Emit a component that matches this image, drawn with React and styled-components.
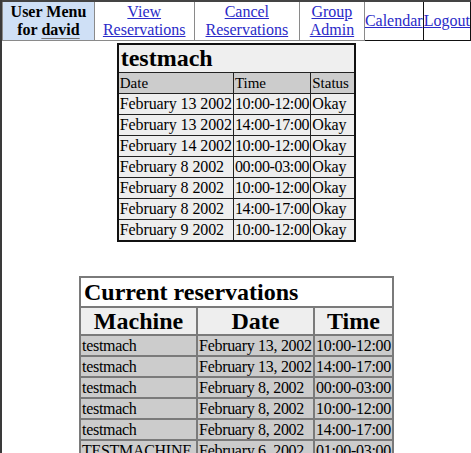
import React from "react";
import styled, { createGlobalStyle } from "styled-components";

const GlobalStyle = createGlobalStyle`
  html, body {
    margin: 0;
    padding: 0;
    background: #ffffff;
  }
  body {
    font-family: "Liberation Serif", "Times New Roman", serif;
    font-size: 16px;
    color: #000;
  }
`;

const Page = styled.div`
  min-height: 100vh;
  border-left: 2px solid #3a3a3a;
  box-sizing: border-box;
  overflow: hidden;
`;

const Nav = styled.table`
  width: 100%;
  border-collapse: collapse;
  border-top: 2px solid #444;
  td {
    border: 1px solid #8a8a8a;
    padding: 1px 2px;
    text-align: center;
    vertical-align: middle;
    line-height: 18px;
    height: 36px;
  }
`;

const UserCell = styled.td`
  && {
    background: #cfe0f6;
    font-weight: bold;
    width: 88px;
  }
  span {
    text-decoration: underline;
    text-decoration-color: #777;
    text-underline-offset: 3px;
  }
`;

const NavCell = styled.td`
  && {
    width: ${(p) => (p.$w ? `${p.$w}px` : "auto")};
    border-color: ${(p) => (p.$dark ? "#111" : "#8a8a8a")};
    padding: ${(p) => (p.$dark ? "0" : "1px 2px")};
  }
`;

const NavLink = styled.a`
  color: #2a2ac8;
  text-decoration: underline;
`;

const Content = styled.div`
  display: flex;
  flex-direction: column;
  align-items: center;
  gap: 34px;
  padding-top: 2px;
`;

const MachineTable = styled.table`
  border-collapse: collapse;
  border: 2px solid #111;
  table-layout: fixed;
  white-space: nowrap;
  td {
    border: 1px solid #222;
    padding: 0 1px;
    line-height: 20px;
    background: #eeeeee;
  }
`;

const MachineTitle = styled.td`
  && {
    font-size: 24px;
    font-weight: bold;
    line-height: 27px;
    padding: 0 2px;
    background: #efefef;
  }
`;

const MachineHead = styled.td`
  && {
    font-size: 15px;
    background: #cccccc;
    width: ${(p) => p.$w}px;
  }
`;

const MachineCell = styled.td`
  && {
    letter-spacing: ${(p) => (p.$tight ? "-0.35px" : "-0.1px")};
  }
`;

const ResTable = styled.table`
  border-collapse: collapse;
  border: 2px solid #7a7a7a;
  table-layout: fixed;
  white-space: nowrap;
  td {
    border: 2px solid #7a7a7a;
    padding: 0 1px;
    line-height: 19px;
    background: #cccccc;
  }
`;

const ResTitle = styled.td`
  && {
    background: #ffffff;
    font-size: 24px;
    font-weight: bold;
    line-height: 28px;
    padding: 0 3px;
  }
`;

const ResHead = styled.td`
  && {
    background: #eeeeee;
    font-size: 24px;
    font-weight: bold;
    line-height: 26px;
    text-align: center;
    width: ${(p) => p.$w}px;
  }
`;

const ResCell = styled.td`
  && {
    letter-spacing: -0.3px;
  }
`;

const machineRows = [
  ["February 13 2002", "10:00-12:00", "Okay"],
  ["February 13 2002", "14:00-17:00", "Okay"],
  ["February 14 2002", "10:00-12:00", "Okay"],
  ["February 8 2002", "00:00-03:00", "Okay"],
  ["February 8 2002", "10:00-12:00", "Okay"],
  ["February 8 2002", "14:00-17:00", "Okay"],
  ["February 9 2002", "10:00-12:00", "Okay"],
];

const reservations = [
  ["testmach", "February 13, 2002", "10:00-12:00"],
  ["testmach", "February 13, 2002", "14:00-17:00"],
  ["testmach", "February 8, 2002", "00:00-03:00"],
  ["testmach", "February 8, 2002", "10:00-12:00"],
  ["testmach", "February 8, 2002", "14:00-17:00"],
  ["TESTMACHINE", "February 6, 2002", "01:00-03:00"],
];

export default function App() {
  return (
    <Page>
      <GlobalStyle />
      <Nav>
        <tbody>
          <tr>
            <UserCell>
              User Menu
              <br />
              for <span>david</span>
            </UserCell>
            <NavCell $w={95}>
              <NavLink href="#">
                View
                <br />
                Reservations
              </NavLink>
            </NavCell>
            <NavCell $w={101}>
              <NavLink href="#">
                Cancel
                <br />
                Reservations
              </NavLink>
            </NavCell>
            <NavCell $w={60}>
              <NavLink href="#">
                Group
                <br />
                Admin
              </NavLink>
            </NavCell>
            <NavCell $dark $w={58}>
              <NavLink href="#">Calendar</NavLink>
            </NavCell>
            <NavCell $dark>
              <NavLink href="#">Logout</NavLink>
            </NavCell>
          </tr>
        </tbody>
      </Nav>

      <Content>
        <MachineTable>
          <tbody>
            <tr>
              <MachineTitle colSpan={3}>testmach</MachineTitle>
            </tr>
            <tr>
              <MachineHead $w={112}>Date</MachineHead>
              <MachineHead $w={73}>Time</MachineHead>
              <MachineHead $w={41}>Status</MachineHead>
            </tr>
            {machineRows.map((r, i) => (
              <tr key={i}>
                <MachineCell>{r[0]}</MachineCell>
                <MachineCell $tight>{r[1]}</MachineCell>
                <MachineCell>{r[2]}</MachineCell>
              </tr>
            ))}
          </tbody>
        </MachineTable>

        <ResTable>
          <tbody>
            <tr>
              <ResTitle colSpan={3}>Current reservations</ResTitle>
            </tr>
            <tr>
              <ResHead $w={113}>Machine</ResHead>
              <ResHead $w={113}>Date</ResHead>
              <ResHead $w={73}>Time</ResHead>
            </tr>
            {reservations.map((r, i) => (
              <tr key={i}>
                <ResCell>{r[0]}</ResCell>
                <ResCell>{r[1]}</ResCell>
                <ResCell>{r[2]}</ResCell>
              </tr>
            ))}
          </tbody>
        </ResTable>
      </Content>
    </Page>
  );
}
